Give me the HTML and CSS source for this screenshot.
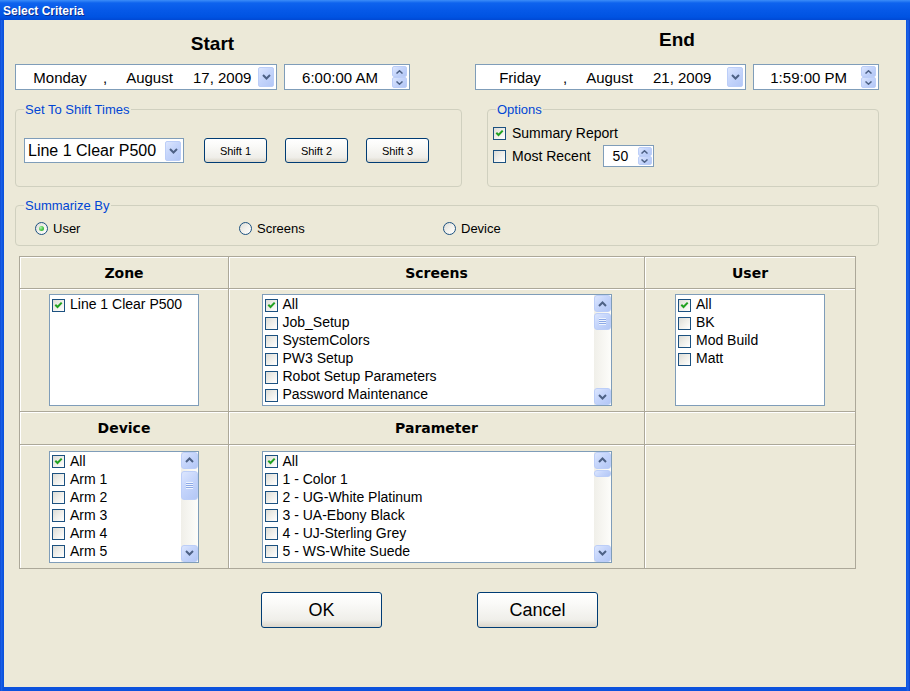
FILE: index.html
```html
<!DOCTYPE html>
<html lang="en">
<head>
<meta charset="utf-8">
<title>Select Criteria</title>
<link rel="stylesheet" href="styles.css">
</head>
<body>
<div class="window">
  <div class="titlebar"><span class="title">Select Criteria</span></div>
  <div class="client">
    <div class="top">
      <div class="range range-start">
        <h2 class="range-title">Start</h2>
        <div class="pickers">
          <div class="field datebox datebox-start">
            <span class="dp-day">Monday</span><span class="dp-sep">,</span><span class="dp-month">August</span><span class="dp-year">17, 2009</span>
            <span class="xbtn drop"><svg width="9" height="6" viewBox="0 0 9 6"><path d="M1 1 L4.5 4.5 L8 1" fill="none" stroke="#4D6185" stroke-width="2"/></svg></span>
          </div>
          <div class="field timebox">
            <span class="tb-text">6:00:00 AM</span>
            <span class="spin">
              <span class="xbtn spin-btn"><svg width="7" height="4" viewBox="0 0 7 4"><path d="M0.5 3.5 L3.5 0.8 L6.5 3.5" fill="none" stroke="#4D6185" stroke-width="1.5"/></svg></span>
              <span class="xbtn spin-btn"><svg width="7" height="4" viewBox="0 0 7 4"><path d="M0.5 0.5 L3.5 3.2 L6.5 0.5" fill="none" stroke="#4D6185" stroke-width="1.5"/></svg></span>
            </span>
          </div>
        </div>
      </div>
      <div class="range range-end">
        <h2 class="range-title">End</h2>
        <div class="pickers">
          <div class="field datebox datebox-end">
            <span class="dp-day">Friday</span><span class="dp-sep">,</span><span class="dp-month">August</span><span class="dp-year">21, 2009</span>
            <span class="xbtn drop"><svg width="9" height="6" viewBox="0 0 9 6"><path d="M1 1 L4.5 4.5 L8 1" fill="none" stroke="#4D6185" stroke-width="2"/></svg></span>
          </div>
          <div class="field timebox">
            <span class="tb-text">1:59:00 PM</span>
            <span class="spin">
              <span class="xbtn spin-btn"><svg width="7" height="4" viewBox="0 0 7 4"><path d="M0.5 3.5 L3.5 0.8 L6.5 3.5" fill="none" stroke="#4D6185" stroke-width="1.5"/></svg></span>
              <span class="xbtn spin-btn"><svg width="7" height="4" viewBox="0 0 7 4"><path d="M0.5 0.5 L3.5 3.2 L6.5 0.5" fill="none" stroke="#4D6185" stroke-width="1.5"/></svg></span>
            </span>
          </div>
        </div>
      </div>
    </div>

    <div class="groups">
      <fieldset class="group group-shift">
        <legend>Set To Shift Times</legend>
        <div class="shift-row">
          <div class="field combo">
            <span class="combo-text">Line 1 Clear P500</span>
            <span class="xbtn drop"><svg width="9" height="6" viewBox="0 0 9 6"><path d="M1 1 L4.5 4.5 L8 1" fill="none" stroke="#4D6185" stroke-width="2"/></svg></span>
          </div>
          <div class="shift-btns">
            <button class="btn btn-small">Shift 1</button>
            <button class="btn btn-small">Shift 2</button>
            <button class="btn btn-small">Shift 3</button>
          </div>
        </div>
      </fieldset>
      <fieldset class="group group-options">
        <legend>Options</legend>
        <div class="opt-row">
          <span class="cb checked"><svg width="11" height="11" viewBox="0 0 11 11"><path d="M2.3 4.8 L4.5 7 L8.7 2.6" fill="none" stroke="#21A121" stroke-width="2"/></svg></span>
          <span class="opt-label">Summary Report</span>
        </div>
        <div class="opt-row opt-row-2">
          <span class="cb"></span>
          <span class="opt-label">Most Recent</span>
          <div class="field numbox">
            <span class="num-text">50</span>
            <span class="spin spin-num">
              <span class="xbtn spin-btn"><svg width="7" height="4" viewBox="0 0 7 4"><path d="M0.5 3.5 L3.5 0.8 L6.5 3.5" fill="none" stroke="#4D6185" stroke-width="1.5"/></svg></span>
              <span class="xbtn spin-btn"><svg width="7" height="4" viewBox="0 0 7 4"><path d="M0.5 0.5 L3.5 3.2 L6.5 0.5" fill="none" stroke="#4D6185" stroke-width="1.5"/></svg></span>
            </span>
          </div>
        </div>
      </fieldset>
    </div>

    <fieldset class="group group-summ">
      <legend>Summarize By</legend>
      <div class="radio-row">
        <span class="radio-item"><span class="rd on"></span>User</span>
        <span class="radio-item"><span class="rd"></span>Screens</span>
        <span class="radio-item"><span class="rd"></span>Device</span>
      </div>
    </fieldset>

    <div class="crit">
      <div class="cell hd">Zone</div>
      <div class="cell hd">Screens</div>
      <div class="cell hd">User</div>

      <div class="cell">
        <div class="lb lb-narrow">
          <div class="lb-items">
            <div class="li"><span class="cb checked"><svg width="11" height="11" viewBox="0 0 11 11"><path d="M2.3 4.8 L4.5 7 L8.7 2.6" fill="none" stroke="#21A121" stroke-width="2"/></svg></span>Line 1 Clear P500</div>
          </div>
        </div>
      </div>
      <div class="cell">
        <div class="lb lb-wide">
          <div class="lb-items">
            <div class="li"><span class="cb checked"><svg width="11" height="11" viewBox="0 0 11 11"><path d="M2.3 4.8 L4.5 7 L8.7 2.6" fill="none" stroke="#21A121" stroke-width="2"/></svg></span>All</div>
            <div class="li"><span class="cb"></span>Job_Setup</div>
            <div class="li"><span class="cb"></span>SystemColors</div>
            <div class="li"><span class="cb"></span>PW3 Setup</div>
            <div class="li"><span class="cb"></span>Robot Setup Parameters</div>
            <div class="li"><span class="cb"></span>Password Maintenance</div>
          </div>
          <div class="sb">
            <span class="xbtn sb-btn"><svg width="9" height="6" viewBox="0 0 9 6"><path d="M1 5 L4.5 1.5 L8 5" fill="none" stroke="#4D6185" stroke-width="2"/></svg></span>
            <span class="xbtn sb-thumb thumb-screens"><span class="grip"></span></span>
            <span class="sb-space"></span>
            <span class="xbtn sb-btn"><svg width="9" height="6" viewBox="0 0 9 6"><path d="M1 1 L4.5 4.5 L8 1" fill="none" stroke="#4D6185" stroke-width="2"/></svg></span>
          </div>
        </div>
      </div>
      <div class="cell">
        <div class="lb lb-narrow">
          <div class="lb-items">
            <div class="li"><span class="cb checked"><svg width="11" height="11" viewBox="0 0 11 11"><path d="M2.3 4.8 L4.5 7 L8.7 2.6" fill="none" stroke="#21A121" stroke-width="2"/></svg></span>All</div>
            <div class="li"><span class="cb"></span>BK</div>
            <div class="li"><span class="cb"></span>Mod Build</div>
            <div class="li"><span class="cb"></span>Matt</div>
          </div>
        </div>
      </div>

      <div class="cell hd">Device</div>
      <div class="cell hd">Parameter</div>
      <div class="cell hd"></div>

      <div class="cell">
        <div class="lb lb-narrow">
          <div class="lb-items">
            <div class="li"><span class="cb checked"><svg width="11" height="11" viewBox="0 0 11 11"><path d="M2.3 4.8 L4.5 7 L8.7 2.6" fill="none" stroke="#21A121" stroke-width="2"/></svg></span>All</div>
            <div class="li"><span class="cb"></span>Arm 1</div>
            <div class="li"><span class="cb"></span>Arm 2</div>
            <div class="li"><span class="cb"></span>Arm 3</div>
            <div class="li"><span class="cb"></span>Arm 4</div>
            <div class="li"><span class="cb"></span>Arm 5</div>
          </div>
          <div class="sb">
            <span class="xbtn sb-btn"><svg width="9" height="6" viewBox="0 0 9 6"><path d="M1 5 L4.5 1.5 L8 5" fill="none" stroke="#4D6185" stroke-width="2"/></svg></span>
            <span class="xbtn sb-thumb thumb-device"><span class="grip"></span></span>
            <span class="sb-space"></span>
            <span class="xbtn sb-btn"><svg width="9" height="6" viewBox="0 0 9 6"><path d="M1 1 L4.5 4.5 L8 1" fill="none" stroke="#4D6185" stroke-width="2"/></svg></span>
          </div>
        </div>
      </div>
      <div class="cell">
        <div class="lb lb-wide">
          <div class="lb-items">
            <div class="li"><span class="cb checked"><svg width="11" height="11" viewBox="0 0 11 11"><path d="M2.3 4.8 L4.5 7 L8.7 2.6" fill="none" stroke="#21A121" stroke-width="2"/></svg></span>All</div>
            <div class="li"><span class="cb"></span>1 - Color 1</div>
            <div class="li"><span class="cb"></span>2 - UG-White Platinum</div>
            <div class="li"><span class="cb"></span>3 - UA-Ebony Black</div>
            <div class="li"><span class="cb"></span>4 - UJ-Sterling Grey</div>
            <div class="li"><span class="cb"></span>5 - WS-White Suede</div>
          </div>
          <div class="sb">
            <span class="xbtn sb-btn"><svg width="9" height="6" viewBox="0 0 9 6"><path d="M1 5 L4.5 1.5 L8 5" fill="none" stroke="#4D6185" stroke-width="2"/></svg></span>
            <span class="xbtn sb-thumb thumb-param"></span>
            <span class="sb-space"></span>
            <span class="xbtn sb-btn"><svg width="9" height="6" viewBox="0 0 9 6"><path d="M1 1 L4.5 4.5 L8 1" fill="none" stroke="#4D6185" stroke-width="2"/></svg></span>
          </div>
        </div>
      </div>
      <div class="cell"></div>
    </div>

    <div class="actions">
      <button class="btn btn-big">OK</button>
      <button class="btn btn-big">Cancel</button>
    </div>
  </div>
</div>
</body>
</html>
```

FILE: styles.css
```css
* { box-sizing: border-box; }
html, body { margin: 0; padding: 0; }
body {
  width: 910px;
  height: 691px;
  overflow: hidden;
  background: #0B4FDB;
  font-family: "Liberation Sans", Arial, sans-serif;
  color: #000;
}
.window {
  width: 910px;
  height: 691px;
  display: flex;
  flex-direction: column;
  background: linear-gradient(to right, #0A3FC8 0, #1C64EA 1px, #0B52DD 3px, #0B52DD 906px, #1C64EA 908px, #0A3FC8 910px);
}
.titlebar {
  height: 20px;
  flex: none;
  display: flex;
  align-items: center;
  padding: 2px 0 0 3px;
  background: linear-gradient(#3C8DF8 0, #0E63EE 3px, #0659E8 10px, #0053E2 17px, #0048D4 20px);
}
.title {
  color: #fff;
  font-weight: bold;
  font-size: 12px;
  text-shadow: 1px 1px 0 #0A2B8F;
}
.client {
  flex: 1;
  margin: 0 4px 4px 4px;
  background: #ECE9D8;
  padding: 9px 27px 0 11px;
}

/* top: start / end */
.top {
  display: flex;
  justify-content: space-between;
  align-items: flex-end;
}
.range { display: flex; flex-direction: column; }
.range-title {
  margin: 0;
  font-size: 19px;
  line-height: 22px;
  font-weight: bold;
  text-align: center;
}
.range-start .range-title { margin: 4px 0 9px; }
.range-end .range-title { margin: 0 0 13px; }
.pickers { display: flex; gap: 7px; }

.field {
  height: 26px;
  border: 1px solid #7F9DB9;
  background: #fff;
  display: flex;
  align-items: center;
  font-size: 15px;
  white-space: nowrap;
}
.datebox-start { width: 262px; }
.datebox-end { width: 271px; }
.dp-day { width: 70px; margin-left: 9px; text-align: center; }
.dp-sep { width: 20px; text-align: center; }
.dp-month { width: 69px; text-align: center; }
.dp-year { margin-left: 9px; }

.xbtn {
  display: flex;
  align-items: center;
  justify-content: center;
  border: 1px solid #BCCEF8;
  border-radius: 2px;
  background: linear-gradient(135deg, #DCE6FE 0%, #C5D5FB 45%, #B3C7F6 100%);
  flex: none;
}
.drop {
  width: 16px;
  height: 20px;
  margin-left: auto;
  margin-right: 2px;
}
.timebox { width: 126px; }
.tb-text { flex: 1; text-align: right; padding-right: 14px; }
.spin {
  display: flex;
  flex-direction: column;
  width: 15px;
  height: 22px;
  margin-right: 2px;
}
.spin-btn { flex: 1; border-radius: 2px; }

/* group boxes */
.groups {
  display: flex;
  gap: 25px;
  margin-top: 12px;
}
.group {
  margin: 0;
  border: 1px solid #D0D0BF;
  border-radius: 4px;
  padding: 0;
  min-width: 0;
}
.group legend {
  margin-left: 8px;
  padding: 0 1px;
  font-size: 13px;
  line-height: 15px;
  color: #0046D5;
}
.group-shift {
  width: 447px;
  padding: 21px 0 23px 0;
}
.shift-row { display: flex; align-items: center; margin-left: 8px; }
.combo { width: 160px; height: 25px; font-size: 16px; }
.combo-text { padding-left: 3px; }
.shift-btns { display: flex; gap: 18px; margin-left: 20px; }

.btn {
  font-family: "Liberation Sans", Arial, sans-serif;
  color: #000;
  border: 1px solid #003C74;
  border-radius: 3px;
  background: linear-gradient(#FFFFFF 0%, #FAFAF8 30%, #EFEEE9 80%, #DCD7CB 100%);
  padding: 0;
  cursor: default;
}
.btn-small { width: 63px; height: 25px; font-size: 11px; }
.btn-big { width: 121px; height: 36px; font-size: 18px; }

.group-options {
  width: 392px;
  padding: 7px 0 0 0;
}
.opt-row {
  display: flex;
  align-items: center;
  height: 18px;
  font-size: 14px;
  margin-left: 5px;
}
.opt-row-2 { height: 22px; margin-top: 3px; }
.opt-label { margin-left: 6px; }
.numbox {
  width: 51px;
  height: 22px;
  margin-left: 12px;
  font-size: 14px;
}
.num-text { padding-left: 9px; }
.spin-num { height: 18px; width: 14px; margin-left: auto; margin-right: 1px; }

.cb {
  width: 13px;
  height: 13px;
  flex: none;
  border: 1px solid #1C5180;
  background: linear-gradient(135deg, #DCDCD7 0%, #EEEDE8 45%, #FFFFFF 100%);
  display: flex;
  align-items: center;
  justify-content: center;
}

.group-summ {
  margin-top: 11px;
  padding: 7px 0 9px 0;
}
.radio-row { display: flex; height: 16px; align-items: center; margin-left: 19px; }
.radio-item {
  width: 204px;
  display: flex;
  align-items: center;
  gap: 5px;
  font-size: 13px;
}
.rd {
  width: 13px;
  height: 13px;
  border: 1px solid #1C5180;
  border-radius: 50%;
  background: linear-gradient(135deg, #DCDCD7 0%, #F2F1EC 50%, #FFFFFF 100%);
  display: flex;
  align-items: center;
  justify-content: center;
  flex: none;
}
.rd.on::after {
  content: "";
  width: 5px;
  height: 5px;
  border-radius: 50%;
  background: radial-gradient(circle at 35% 35%, #B6F3B3 0%, #4CC84A 50%, #21A121 100%);
}

/* criteria grid */
.crit {
  display: grid;
  grid-template-columns: 209px 416px 211px;
  grid-template-rows: 32px 123px 33px 124px;
  width: 837px;
  margin: 10px 0 0 4px;
  border-left: 1px solid #ACA899;
  border-top: 1px solid #ACA899;
}
.cell {
  border-right: 1px solid #ACA899;
  border-bottom: 1px solid #ACA899;
  box-shadow: inset 1px 1px 0 #FFFFFF;
  display: flex;
  align-items: center;
  justify-content: center;
}
.hd {
  font-family: "DejaVu Sans", Verdana, sans-serif;
  font-weight: bold;
  font-size: 14px;
}

.lb {
  height: 112px;
  border: 1px solid #7F9DB9;
  background: #fff;
  display: flex;
}
.lb-narrow { width: 150px; }
.lb-wide { width: 350px; }
.lb-items { flex: 1; min-width: 0; overflow: hidden; }
.li {
  height: 18px;
  display: flex;
  align-items: center;
  gap: 5px;
  padding-left: 2px;
  font-size: 14px;
  white-space: nowrap;
}
.li .cb { margin-top: 2px; }

.sb {
  width: 17px;
  display: flex;
  flex-direction: column;
  background: linear-gradient(to right, #F0EFE9, #FDFDFA);
}
.sb-btn { height: 17px; border-radius: 3px; }
.sb-thumb { border-radius: 3px; }
.thumb-screens { height: 17px; margin-top: 1px; }
.thumb-device { height: 29px; margin-top: 2px; }
.thumb-param { height: 7px; margin-top: 1px; }
.sb-space { flex: 1; }
.grip {
  width: 7px;
  height: 7px;
  background: repeating-linear-gradient(to bottom, #EEF4FE 0, #EEF4FE 1px, #8CA8E6 1px, #8CA8E6 2px);
}

.actions {
  display: flex;
  gap: 95px;
  margin-top: 23px;
  padding-left: 246px;
}
```
